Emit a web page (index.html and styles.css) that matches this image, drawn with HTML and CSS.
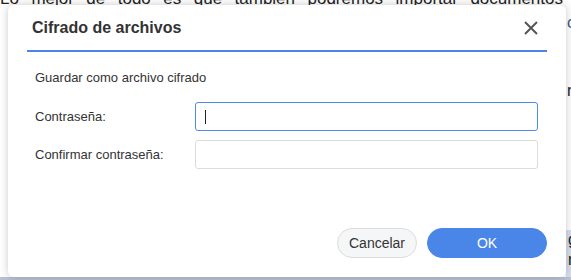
FILE: index.html
```html
<!DOCTYPE html>
<html lang="es">
<head>
<meta charset="utf-8">
<link rel="stylesheet" href="styles.css">
</head>
<body>
<div class="page">
  <p class="bg-line">Lo mejor de todo es que también podremos importar documentos</p>
  <span class="bg-frag frag-1">c</span>
  <span class="bg-frag frag-2">r</span>
  <div class="bg-hl"><span>g</span><span>n</span></div>
  <div class="bg-strip"></div>
</div>
<div class="dialog">
  <div class="dlg-head">
    <h1 class="dlg-title">Cifrado de archivos</h1>
    <svg class="dlg-close" width="14" height="14" viewBox="0 0 14 14"><path d="M1 1L13 13M13 1L1 13" stroke="#555" stroke-width="2" fill="none"/></svg>
  </div>
  <div class="dlg-body">
    <p class="dlg-note">Guardar como archivo cifrado</p>
    <div class="field">
      <label class="field-label">Contraseña:</label>
      <div class="field-input focused"><span class="caret"></span></div>
    </div>
    <div class="field">
      <label class="field-label">Confirmar contraseña:</label>
      <div class="field-input"></div>
    </div>
  </div>
  <div class="dlg-foot">
    <button class="btn btn-cancel">Cancelar</button>
    <button class="btn btn-ok">OK</button>
  </div>
</div>
</body>
</html>
```
FILE: styles.css
```css
html, body {
  margin: 0;
  padding: 0;
  width: 571px;
  height: 280px;
  overflow: hidden;
  background: #fff;
  font-family: "Liberation Sans", Arial, sans-serif;
}
.page {
  position: relative;
  width: 571px;
  height: 280px;
}
.bg-line {
  position: absolute;
  left: 0;
  top: -11px;
  width: 563px;
  margin: 0;
  font-size: 17px;
  line-height: 20px;
  color: #222;
  text-align: justify;
  text-align-last: justify;
  white-space: nowrap;
}
.bg-frag {
  position: absolute;
  left: 567px;
  font-size: 16px;
  color: #222;
}
.frag-1 { top: 14px; color: #3a5a8a; }
.frag-2 { top: 82px; }
.bg-hl {
  position: absolute;
  left: 566px;
  top: 230px;
  width: 10px;
  height: 47px;
  background: #d6deec;
  display: flex;
  flex-direction: column;
  font-size: 16px;
  line-height: 20px;
  color: #222;
  padding-left: 2px;
}
.bg-strip {
  position: absolute;
  left: 0;
  top: 277px;
  width: 571px;
  height: 3px;
  background: #b8c2d4;
}
.dialog {
  position: absolute;
  left: 8px;
  top: 5px;
  width: 558px;
  height: 272px;
  background: #fff;
  border-radius: 6px;
  box-shadow: 0 0 8px rgba(0,0,0,0.22);
  display: flex;
  flex-direction: column;
  box-sizing: border-box;
  padding: 0 19px 0 19px;
}
.dlg-head {
  height: 45px;
  border-bottom: 2px solid #4a86e8;
  display: flex;
  align-items: center;
  justify-content: space-between;
  padding: 0 9px 0 5px;
}
.dlg-title {
  margin: 0;
  margin-top: 1px;
  font-size: 16px;
  font-weight: bold;
  color: #333;
}
.dlg-close {
  display: block;
  margin-top: 1px;
}
.dlg-body {
  padding: 18px 8px 0 8px;
  display: flex;
  flex-direction: column;
  gap: 9px;
}
.dlg-note {
  margin: 0 0 7px 0;
  font-size: 13px;
  line-height: 16px;
  color: #333;
}
.field {
  display: flex;
  align-items: center;
}
.field-label {
  width: 160px;
  font-size: 13px;
  color: #333;
}
.field-input {
  width: 343px;
  height: 29px;
  box-sizing: border-box;
  border: 1px solid #dcdcdc;
  border-radius: 3px;
  display: flex;
  align-items: center;
  padding-left: 9px;
}
.field-input.focused {
  border: 1px solid #4d8af0;
}
.caret {
  width: 1px;
  height: 14px;
  background: #222;
}
.dlg-foot {
  margin-top: auto;
  display: flex;
  justify-content: flex-end;
  gap: 10px;
  padding: 0 0 19px 0;
}
.btn {
  height: 30px;
  border-radius: 15px;
  font-family: "Liberation Sans", Arial, sans-serif;
  font-size: 14px;
  box-sizing: border-box;
  cursor: pointer;
}
.btn-cancel {
  width: 80px;
  background: #f5f6f8;
  border: 1px solid #dcdcdc;
  color: #333;
}
.btn-ok {
  width: 120px;
  background: #4a86e8;
  border: 1px solid #4a86e8;
  color: #fff;
}
```
